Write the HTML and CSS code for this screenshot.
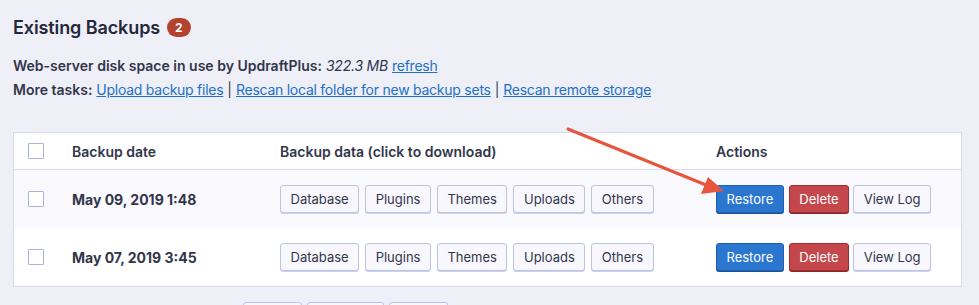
FILE: index.html
```html
<!DOCTYPE html>
<html lang="en">
<head>
    <meta charset="UTF-8">
    <meta name="viewport" content="width=device-width, initial-scale=1.0">
    <title>Existing Backups</title>
    <link rel="stylesheet" href="styles.css">
</head>
<body>
    <div class="wrap">
        <h2 class="title">Existing Backups <span class="count">2</span></h2>
        <p class="info"><strong>Web-server disk space in use by UpdraftPlus:</strong> <em>322.3 MB</em> <a href="#">refresh</a></p>
        <p class="info"><strong>More tasks:</strong> <a href="#">Upload backup files</a> | <a href="#">Rescan local folder for new backup sets</a> | <a href="#">Rescan remote storage</a></p>

        <table class="backups">
            <thead>
                <tr>
                    <th class="col-check"><span class="check"></span></th>
                    <th class="col-date">Backup date</th>
                    <th class="col-data">Backup data (click to download)</th>
                    <th class="col-actions">Actions</th>
                </tr>
            </thead>
            <tbody>
                <tr class="odd">
                    <td class="col-check"><span class="check"></span></td>
                    <td class="col-date">May 09, 2019 1:48</td>
                    <td class="col-data">
                        <button class="btn">Database</button><button class="btn">Plugins</button><button class="btn">Themes</button><button class="btn">Uploads</button><button class="btn">Others</button>
                    </td>
                    <td class="col-actions">
                        <button class="btn btn-restore">Restore</button><button class="btn btn-delete">Delete</button><button class="btn">View Log</button>
                    </td>
                </tr>
                <tr>
                    <td class="col-check"><span class="check"></span></td>
                    <td class="col-date">May 07, 2019 3:45</td>
                    <td class="col-data">
                        <button class="btn">Database</button><button class="btn">Plugins</button><button class="btn">Themes</button><button class="btn">Uploads</button><button class="btn">Others</button>
                    </td>
                    <td class="col-actions">
                        <button class="btn btn-restore">Restore</button><button class="btn btn-delete">Delete</button><button class="btn">View Log</button>
                    </td>
                </tr>
            </tbody>
        </table>

        <div class="bulk">
            <button class="btn btn-small">&nbsp;</button><button class="btn btn-small wide">&nbsp;</button><button class="btn btn-small">&nbsp;</button>
        </div>
    </div>

    <!-- callout arrow pointing at the first Restore button -->
    <svg class="arrow" width="979" height="305" viewBox="0 0 979 305">
        <line x1="568" y1="129" x2="706" y2="185" stroke="#e8553f" stroke-width="3" stroke-linecap="round"/>
        <polygon points="724,191 701,194 708,177" fill="#e8553f"/>
    </svg>
</body>
</html>
```

FILE: styles.css
```css
body {
    margin: 0;
    background: #efeff8;
    font-family: Inter, "Noto Sans", Arial, sans-serif;
    color: #32364a;
    font-size: 14px;
    overflow: hidden;
}

.wrap {
    padding: 13px 17px 0 13px;
}

.title {
    margin: 0 0 13px 0;
    font-size: 18px;
    font-weight: 600;
    letter-spacing: -0.1px;
    color: #23283a;
    display: flex;
    align-items: center;
    gap: 7px;
    height: 28px;
}

.count {
    display: inline-block;
    background: #b2432f;
    color: #fff;
    font-size: 12px;
    font-weight: 700;
    letter-spacing: 0;
    border-radius: 10px;
    padding: 0 8px;
    height: 19px;
    line-height: 19px;
    margin-top: 1px;
}

.info {
    margin: 0;
    line-height: 24px;
    font-size: 14px;
}

.info strong {
    font-weight: 600;
}

.info em {
    letter-spacing: -0.2px;
}

.info a {
    color: #2271c8;
    letter-spacing: -0.25px;
}

/* table */
.backups {
    margin-top: 30px;
    width: 949px;
    border-collapse: collapse;
    background: #fff;
    border: 1px solid #d6dcf2;
}

.backups th {
    text-align: left;
    font-weight: 600;
    font-size: 14px;
    height: 36px;
    padding: 0;
    border-bottom: 1px solid #d6dcf2;
}

.backups td {
    height: 58px;
    padding: 0;
    font-weight: 700;
}

.backups tr.odd td {
    background: #f9f9fe;
}

.col-check {
    width: 58px;
}

.col-date {
    width: 208px;
}

.col-data {
    width: 436px;
}

.check {
    display: block;
    width: 14px;
    height: 14px;
    border: 1px solid #a9b3dc;
    background: #fff;
    border-radius: 1px;
    margin-left: 14px;
}

.btn {
    font-family: Inter, "Noto Sans", Arial, sans-serif;
    font-size: 13px;
    font-weight: 400;
    color: #32364a;
    background: #f7f7fd;
    border: 1px solid #bcc4e6;
    border-radius: 3px;
    box-shadow: 0 1px 0 #ccd2ec;
    height: 28px;
    padding: 0 9.5px;
    margin-right: 6px;
    cursor: pointer;
    vertical-align: middle;
}

.btn:last-child {
    margin-right: 0;
}

.btn-restore {
    background: #2b77cf;
    border-color: #1f5fae;
    box-shadow: 0 1px 0 #1b5396;
    color: #fff;
    margin-right: 5px;
}

.btn-delete {
    background: #c4474b;
    border-color: #a32d31;
    box-shadow: 0 1px 0 #8e2629;
    color: #fff;
    margin-right: 4px;
}

.bulk {
    margin: 15px 0 0 230px;
    display: flex;
    gap: 5px;
}

.btn-small {
    width: 59px;
    margin: 0;
}

.btn-small.wide {
    width: 77px;
}

.arrow {
    position: absolute;
    left: 0;
    top: 0;
    pointer-events: none;
}
```
